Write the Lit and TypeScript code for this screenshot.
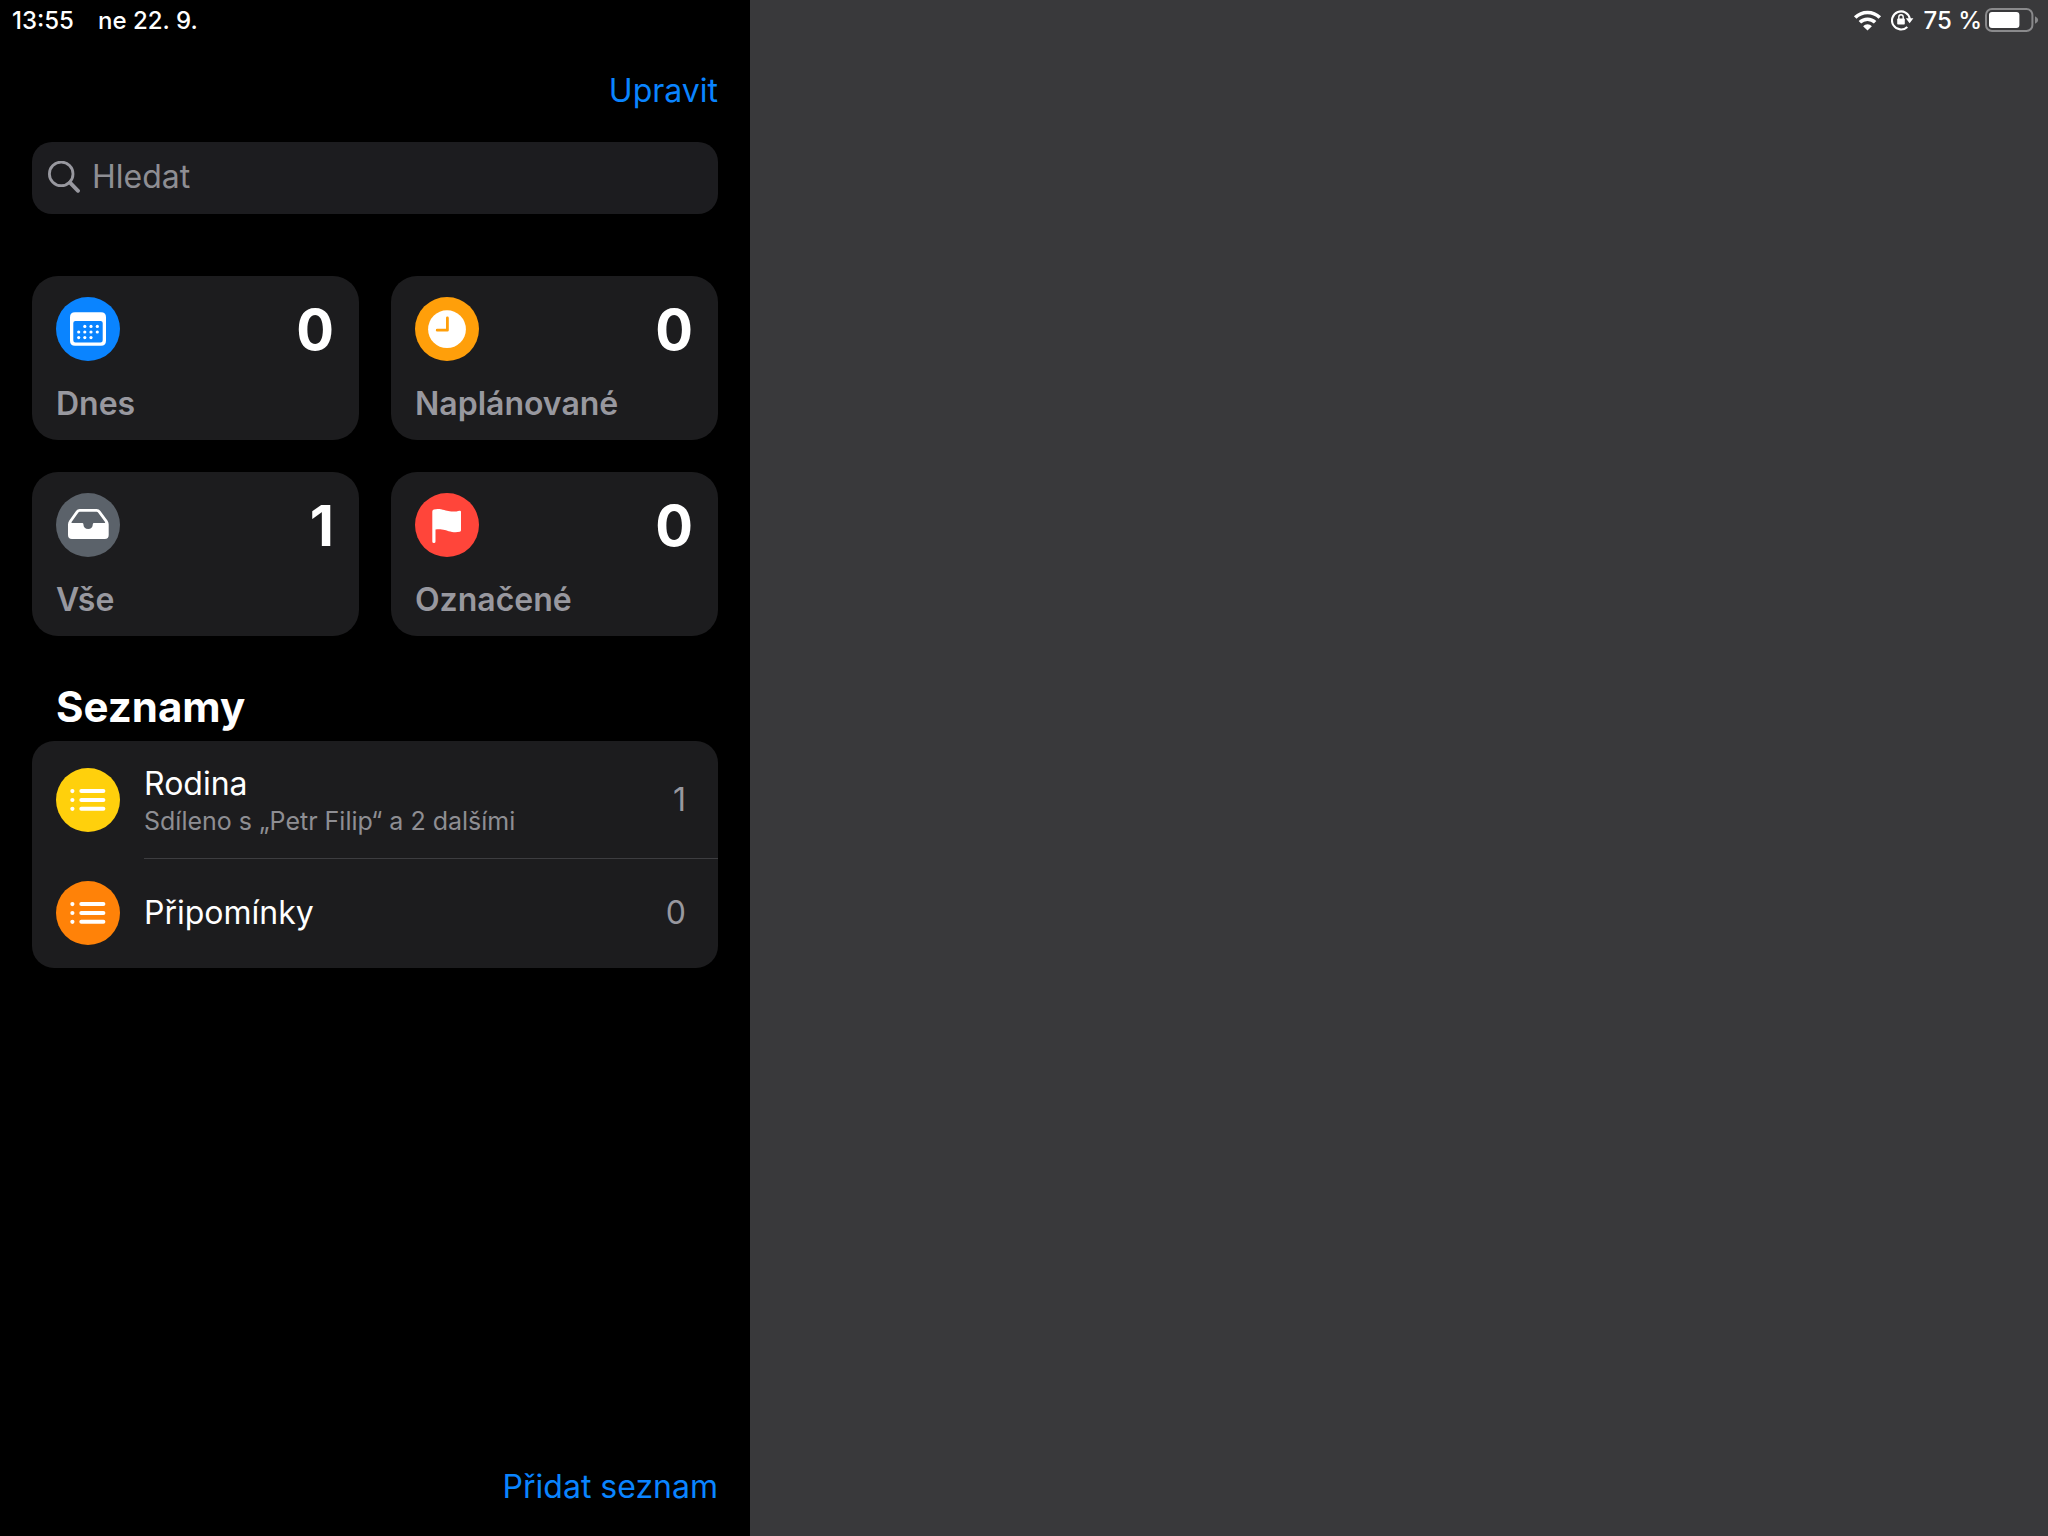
import { LitElement, html, css, svg, nothing } from "lit";
import { customElement, property, state } from "lit/decorators.js";
import { classMap } from "lit/directives/class-map.js";

type IconName = "calendar" | "clock" | "tray" | "flag" | "list";

interface SmartList {
  label: string;
  count: number;
  icon: IconName;
  tone: string;
}

interface ReminderList {
  name: string;
  note?: string;
  count: number;
  tone: string;
}

const SMART_LISTS: SmartList[] = [
  { label: "Dnes", count: 0, icon: "calendar", tone: "blue" },
  { label: "Naplánované", count: 0, icon: "clock", tone: "amber" },
  { label: "Vše", count: 1, icon: "tray", tone: "slate" },
  { label: "Označené", count: 0, icon: "flag", tone: "red" },
];

const LISTS: ReminderList[] = [
  { name: "Rodina", note: "Sdíleno s „Petr Filip“ a 2 dalšími", count: 1, tone: "yellow" },
  { name: "Připomínky", count: 0, tone: "orange" },
];

const GLYPHS = {
  calendar: svg`
    <path fill="#fff" fill-rule="evenodd" d="M19 15.3H45Q50 15.3 50 20.3V43.8Q50 48.8 45 48.8H19Q14 48.8 14 43.8V20.3Q14 15.3 19 15.3ZM19.4 24Q17.3 24 17.3 26V43.2Q17.3 45.4 19.5 45.4H44.5Q46.7 45.4 46.7 43.2V26Q46.7 24 44.6 24Z"/>
    <g fill="#fff">
      <circle cx="28.8" cy="29.4" r="1.6"/><circle cx="35" cy="29.4" r="1.6"/><circle cx="41.3" cy="29.4" r="1.6"/>
      <circle cx="22.7" cy="35" r="1.6"/><circle cx="28.8" cy="35" r="1.6"/><circle cx="35" cy="35" r="1.6"/><circle cx="41.3" cy="35" r="1.6"/>
      <circle cx="22.7" cy="40.6" r="1.6"/><circle cx="28.8" cy="40.6" r="1.6"/><circle cx="35" cy="40.6" r="1.6"/>
    </g>`,
  clock: svg`
    <circle cx="32" cy="32.2" r="18.9" fill="#fff"/>
    <path d="M32.4 21V33.2H22.2" fill="none" stroke="#ff9f0a" stroke-width="2.8" stroke-linecap="round" stroke-linejoin="round"/>`,
  tray: svg`
    <path fill="#fff" fill-rule="evenodd" d="M23.6 16H40.6Q43 16 44.4 18L51.4 27.6Q52.7 29.4 52.7 31.6V42Q52.7 46 48.7 46H16Q12 46 12 42V31.6Q12 29.4 13.3 27.6L20 18Q21.4 16 23.6 16ZM23.8 18.8Q22.8 18.8 22.2 19.7L15.6 29Q15 30 16 30H26.2Q27.4 30 27.4 31.2C27.4 34 29.4 36 32.2 36S36.8 34 36.8 31.2Q36.8 30 38 30H48.6Q49.6 30 49 29L42.2 19.7Q41.6 18.8 40.6 18.8Z"/>`,
  flag: svg`
    <path fill="#fff" d="M17.3 18.4Q17.3 16.9 18.8 16.5C21 15.9 23.4 15.8 26 16.3C31 17.3 33 18.6 38 18.6C40.6 18.6 42.6 18.2 44.6 17.7Q46 17.5 46 18.8V37.2Q46 38.4 44.8 38.7C42.6 39.2 40 39.4 37 38.9C32 38 30 36.4 25.2 36.2C23.4 36.1 21.8 36.3 20.5 36.6V48.6Q20.5 50.1 18.9 50.1Q17.3 50.1 17.3 48.6Z"/>`,
  list: svg`
    <g fill="#fff"><circle cx="16.4" cy="23.1" r="2.1"/><circle cx="16.4" cy="32" r="2.1"/><circle cx="16.4" cy="40.8" r="2.1"/></g>
    <path d="M25.3 23.1H47.4M25.3 32H47.4M25.3 40.8H47.4" stroke="#fff" stroke-width="4" stroke-linecap="round"/>`,
};

@customElement("round-icon")
class RoundIcon extends LitElement {
  @property() name: IconName = "list";
  @property() tone = "blue";

  static styles = css`
    :host { display: block; flex: none; width: 64px; height: 64px; }
    .disc { display: block; width: 100%; height: 100%; border-radius: 50%; }
    .blue { background: #0a84ff; }
    .amber { background: #ff9f0a; }
    .slate { background: #5b626a; }
    .red { background: #ff453a; }
    .yellow { background: #ffd00c; }
    .orange { background: #ff8208; }
  `;

  render() {
    return html`<svg class=${classMap({ disc: true, [this.tone]: true })} viewBox="0 0 64 64" aria-hidden="true">${GLYPHS[this.name]}</svg>`;
  }
}

@customElement("status-icons")
class StatusIcons extends LitElement {
  static styles = css`
    :host { display: flex; align-items: center; }
    svg { display: block; flex: none; }
    .wifi { margin-right: 9px; }
    .lock { margin-right: 9px; }
    .charge { margin-right: 3px; white-space: nowrap; }
  `;

  render() {
    return html`
      <svg class="wifi" width="29" height="21" viewBox="0 0 29 21" aria-hidden="true">
        <path d="M2.2 7.6A17.4 17.4 0 0 1 26.8 7.6" fill="none" stroke="#fff" stroke-width="3.6"/>
        <path d="M6.9 12.3A10.8 10.8 0 0 1 22.1 12.3" fill="none" stroke="#fff" stroke-width="3.5"/>
        <path d="M14.5 20.6L10.1 16.2A6.2 6.2 0 0 1 18.9 16.2Z" fill="#fff"/>
      </svg>
      <svg class="lock" width="23" height="21" viewBox="0 0 23 21" aria-hidden="true">
        <path d="M16.3 16.9A9 9 0 1 1 18.9 9" fill="none" stroke="#fff" stroke-width="2.1"/>
        <path d="M14.8 8.2H22.4L18.6 13.2Z" fill="#fff"/>
        <rect x="6.2" y="8.6" width="7.6" height="6" rx="0.8" fill="#fff"/>
        <path d="M7.8 9V7A2.2 2.2 0 0 1 12.2 7V9" fill="none" stroke="#fff" stroke-width="1.4"/>
      </svg>
      <span class="charge">75 %</span>
      <svg width="54" height="24" viewBox="0 0 54 24" aria-hidden="true">
        <rect x="1" y="1" width="46.4" height="22" rx="6" fill="none" stroke="#8a8a8c" stroke-width="2"/>
        <rect x="4" y="4" width="30.4" height="16" rx="3" fill="#fff"/>
        <path d="M50 8.2Q53.2 9.6 53.2 12T50 15.8Z" fill="#8a8a8c"/>
      </svg>
    `;
  }
}

@customElement("app-root")
class AppRoot extends LitElement {
  @state() private query = "";

  static styles = css`
    :host {
      display: block;
      font-family: Inter, "Liberation Sans", sans-serif;
      color: #fff;
      background: #000;
    }
    *, *::before { box-sizing: border-box; }
    button, input {
      font: inherit;
      color: inherit;
      background: none;
      border: 0;
      padding: 0;
      margin: 0;
      text-align: left;
    }
    button { cursor: pointer; }
    .shell {
      display: grid;
      grid-template-columns: minmax(0, 375fr) minmax(0, 649fr);
      min-height: 100vh;
    }
    .sidebar { display: flex; flex-direction: column; }
    .content { display: flex; flex-direction: column; flex: 1; padding: 0 32px; }
    .detail { background: #39393b; }
    .status {
      display: flex;
      align-items: center;
      height: 40px;
      gap: 24px;
      padding: 0 9px 0 12px;
      font-size: 24px;
      font-weight: 500;
    }
    .detail .status { justify-content: flex-end; }
    .toolbar { display: flex; align-items: center; justify-content: flex-end; height: 102px; }
    .link { color: #0a84ff; font-size: 32px; line-height: 44px; }
    .search {
      display: flex;
      align-items: center;
      gap: 12px;
      height: 72px;
      padding: 0 16px 2px;
      border-radius: 20px;
      background: #1c1c1f;
      color: #98989f;
    }
    .search svg { flex: none; }
    .field { flex: 1; min-width: 0; font-size: 32px; line-height: 44px; outline: none; }
    .field::placeholder { color: #8e8e93; opacity: 1; }
    .cards {
      display: grid;
      grid-template-columns: 1fr 1fr;
      gap: 32px;
      margin-top: 62px;
    }
    .card {
      display: flex;
      flex-direction: column;
      gap: 22px;
      padding: 21px 24px 15px;
      border-radius: 26px;
      background: #1c1c1e;
    }
    .top { display: flex; align-items: flex-start; justify-content: space-between; height: 64px; width: 100%; padding-right: 1px; }
    .total { font-size: 56px; line-height: 66px; font-weight: 700; }
    .label { font-size: 32px; line-height: 42px; font-weight: 600; color: #98989f; }
    .heading { margin: 45px 24px 8px; font-size: 42px; line-height: 52px; font-weight: 700; }
    .lists { margin: 0; padding: 0 0 1px; list-style: none; border-radius: 22px; background: #1c1c1e; overflow: hidden; }
    .row { display: flex; align-items: center; gap: 24px; width: 100%; padding-left: 24px; }
    .body {
      display: flex;
      align-items: center;
      justify-content: space-between;
      flex: 1;
      min-width: 0;
      min-height: 108px;
      padding-right: 32px;
    }
    .shared .body { min-height: 118px; border-bottom: 1px solid #3d3d40; }
    .text { display: flex; flex-direction: column; min-width: 0; }
    .name { font-size: 32px; line-height: 42px; }
    .note { font-size: 25px; line-height: 32px; color: #8e8e93; }
    .count { font-size: 32px; line-height: 42px; color: #98989f; }
    .footer { display: flex; align-items: center; justify-content: flex-end; height: 98px; margin-top: auto; }
  `;

  private onInput(e: Event) {
    this.query = (e.target as HTMLInputElement).value;
  }

  render() {
    return html`
      <div class="shell">
        <aside class="sidebar">
          <div class="status"><span>13:55</span><span>ne 22. 9.</span></div>
          <div class="content">
            <div class="toolbar"><button class="link" type="button">Upravit</button></div>
            <label class="search">
              <svg width="32" height="32" viewBox="0 0 32 32" aria-hidden="true">
                <circle cx="13.2" cy="12.9" r="11.8" fill="none" stroke="currentColor" stroke-width="2.8"/>
                <path d="M22 21.6L30 29.8" stroke="currentColor" stroke-width="3.8" stroke-linecap="round"/>
              </svg>
              <input class="field" type="text" placeholder="Hledat" aria-label="Hledat" .value=${this.query} @input=${this.onInput}>
            </label>
            <div class="cards">
              ${SMART_LISTS.map(
                (c) => html`
                  <button class="card" type="button">
                    <span class="top">
                      <round-icon name=${c.icon} tone=${c.tone}></round-icon>
                      <span class="total">${c.count}</span>
                    </span>
                    <span class="label">${c.label}</span>
                  </button>
                `
              )}
            </div>
            <h2 class="heading">Seznamy</h2>
            <ul class="lists">
              ${LISTS.map(
                (l) => html`
                  <li>
                    <button type="button" class=${classMap({ row: true, shared: !!l.note })}>
                      <round-icon name="list" tone=${l.tone}></round-icon>
                      <span class="body">
                        <span class="text">
                          <span class="name">${l.name}</span>
                          ${l.note ? html`<span class="note">${l.note}</span>` : nothing}
                        </span>
                        <span class="count">${l.count}</span>
                      </span>
                    </button>
                  </li>
                `
              )}
            </ul>
            <div class="footer"><button class="link" type="button">Přidat seznam</button></div>
          </div>
        </aside>
        <main class="detail">
          <div class="status"><status-icons></status-icons></div>
        </main>
      </div>
    `;
  }
}
